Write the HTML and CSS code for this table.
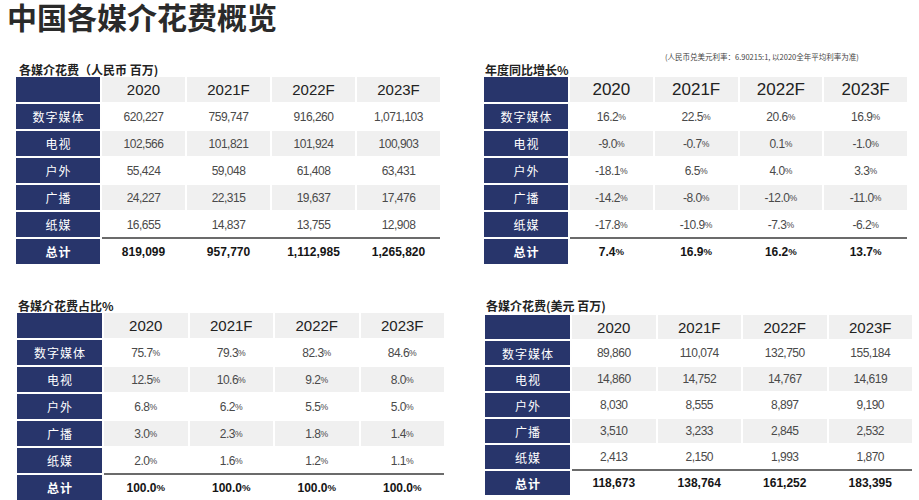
FILE: index.html
```html
<!DOCTYPE html>
<html lang="zh">
<head>
<meta charset="utf-8">
<link rel="stylesheet" href="styles.css">
</head>
<body>
<div class="page">
  <h1 class="title">中国各媒介花费概览</h1>
  <div class="grid">
    <section class="panel p1">
      <h2 class="cap">各媒介花费（人民币 百万)</h2>
      <div class="tbl">
        <div class="row head"><div class="lab"></div><div class="c">2020</div><div class="c">2021F</div><div class="c">2022F</div><div class="c">2023F</div></div>
        <div class="row"><div class="lab">数字媒体</div><div class="c">620,227</div><div class="c">759,747</div><div class="c">916,260</div><div class="c">1,071,103</div></div>
        <div class="row alt"><div class="lab">电视</div><div class="c">102,566</div><div class="c">101,821</div><div class="c">101,924</div><div class="c">100,903</div></div>
        <div class="row"><div class="lab">户外</div><div class="c">55,424</div><div class="c">59,048</div><div class="c">61,408</div><div class="c">63,431</div></div>
        <div class="row alt"><div class="lab">广播</div><div class="c">24,227</div><div class="c">22,315</div><div class="c">19,637</div><div class="c">17,476</div></div>
        <div class="row"><div class="lab">纸媒</div><div class="c">16,655</div><div class="c">14,837</div><div class="c">13,755</div><div class="c">12,908</div></div>
        <div class="row total"><div class="lab">总计</div><div class="vals"><div class="c">819,099</div><div class="c">957,770</div><div class="c">1,112,985</div><div class="c">1,265,820</div></div></div>
      </div>
    </section>

    <section class="panel p2">
      <p class="note">(人民币兑美元利率：6.90215:1, 以2020全年平均利率为准)</p>
      <h2 class="cap">年度同比增长%</h2>
      <div class="tbl">
        <div class="row head"><div class="lab"></div><div class="c">2020</div><div class="c">2021F</div><div class="c">2022F</div><div class="c">2023F</div></div>
        <div class="row"><div class="lab">数字媒体</div><div class="c">16.2<span class="pc">%</span></div><div class="c">22.5<span class="pc">%</span></div><div class="c">20.6<span class="pc">%</span></div><div class="c">16.9<span class="pc">%</span></div></div>
        <div class="row alt"><div class="lab">电视</div><div class="c">-9.0<span class="pc">%</span></div><div class="c">-0.7<span class="pc">%</span></div><div class="c">0.1<span class="pc">%</span></div><div class="c">-1.0<span class="pc">%</span></div></div>
        <div class="row"><div class="lab">户外</div><div class="c">-18.1<span class="pc">%</span></div><div class="c">6.5<span class="pc">%</span></div><div class="c">4.0<span class="pc">%</span></div><div class="c">3.3<span class="pc">%</span></div></div>
        <div class="row alt"><div class="lab">广播</div><div class="c">-14.2<span class="pc">%</span></div><div class="c">-8.0<span class="pc">%</span></div><div class="c">-12.0<span class="pc">%</span></div><div class="c">-11.0<span class="pc">%</span></div></div>
        <div class="row"><div class="lab">纸媒</div><div class="c">-17.8<span class="pc">%</span></div><div class="c">-10.9<span class="pc">%</span></div><div class="c">-7.3<span class="pc">%</span></div><div class="c">-6.2<span class="pc">%</span></div></div>
        <div class="row total"><div class="lab">总计</div><div class="vals"><div class="c">7.4<span class="pc">%</span></div><div class="c">16.9<span class="pc">%</span></div><div class="c">16.2<span class="pc">%</span></div><div class="c">13.7<span class="pc">%</span></div></div></div>
      </div>
    </section>

    <section class="panel p3">
      <h2 class="cap">各媒介花费占比%</h2>
      <div class="tbl">
        <div class="row head"><div class="lab"></div><div class="c">2020</div><div class="c">2021F</div><div class="c">2022F</div><div class="c">2023F</div></div>
        <div class="row"><div class="lab">数字媒体</div><div class="c">75.7<span class="pc">%</span></div><div class="c">79.3<span class="pc">%</span></div><div class="c">82.3<span class="pc">%</span></div><div class="c">84.6<span class="pc">%</span></div></div>
        <div class="row alt"><div class="lab">电视</div><div class="c">12.5<span class="pc">%</span></div><div class="c">10.6<span class="pc">%</span></div><div class="c">9.2<span class="pc">%</span></div><div class="c">8.0<span class="pc">%</span></div></div>
        <div class="row"><div class="lab">户外</div><div class="c">6.8<span class="pc">%</span></div><div class="c">6.2<span class="pc">%</span></div><div class="c">5.5<span class="pc">%</span></div><div class="c">5.0<span class="pc">%</span></div></div>
        <div class="row alt"><div class="lab">广播</div><div class="c">3.0<span class="pc">%</span></div><div class="c">2.3<span class="pc">%</span></div><div class="c">1.8<span class="pc">%</span></div><div class="c">1.4<span class="pc">%</span></div></div>
        <div class="row"><div class="lab">纸媒</div><div class="c">2.0<span class="pc">%</span></div><div class="c">1.6<span class="pc">%</span></div><div class="c">1.2<span class="pc">%</span></div><div class="c">1.1<span class="pc">%</span></div></div>
        <div class="row total"><div class="lab">总计</div><div class="vals"><div class="c">100.0<span class="pc">%</span></div><div class="c">100.0<span class="pc">%</span></div><div class="c">100.0<span class="pc">%</span></div><div class="c">100.0<span class="pc">%</span></div></div></div>
      </div>
    </section>

    <section class="panel p4">
      <h2 class="cap">各媒介花费(美元 百万)</h2>
      <div class="tbl">
        <div class="row head"><div class="lab"></div><div class="c">2020</div><div class="c">2021F</div><div class="c">2022F</div><div class="c">2023F</div></div>
        <div class="row"><div class="lab">数字媒体</div><div class="c">89,860</div><div class="c">110,074</div><div class="c">132,750</div><div class="c">155,184</div></div>
        <div class="row alt"><div class="lab">电视</div><div class="c">14,860</div><div class="c">14,752</div><div class="c">14,767</div><div class="c">14,619</div></div>
        <div class="row"><div class="lab">户外</div><div class="c">8,030</div><div class="c">8,555</div><div class="c">8,897</div><div class="c">9,190</div></div>
        <div class="row alt"><div class="lab">广播</div><div class="c">3,510</div><div class="c">3,233</div><div class="c">2,845</div><div class="c">2,532</div></div>
        <div class="row"><div class="lab">纸媒</div><div class="c">2,413</div><div class="c">2,150</div><div class="c">1,993</div><div class="c">1,870</div></div>
        <div class="row total"><div class="lab">总计</div><div class="vals"><div class="c">118,673</div><div class="c">138,764</div><div class="c">161,252</div><div class="c">183,395</div></div></div>
      </div>
    </section>
  </div>
</div>
</body>
</html>
```

FILE: styles.css
```css
html, body {
  margin: 0;
  padding: 0;
  background: #ffffff;
}
body {
  font-family: "Liberation Sans", "Noto Sans CJK SC", sans-serif;
  color: #333333;
}
.page {
  width: 919px;
  height: 500px;
  overflow: hidden;
}
.title {
  margin: 0;
  padding: 2px 0 0 7px;
  font-family: "Liberation Sans", "Noto Sans CJK SC", sans-serif;
  font-size: 30px;
  font-weight: 700;
  line-height: 34px;
  height: 34px;
  color: #2a2a2a;
}
.grid {
  display: grid;
  grid-template-columns: 428px 428px;
  column-gap: 40px;
  row-gap: 34px;
  padding-left: 16px;
  margin-top: 15px;
  align-items: end;
}
.panel {
  display: flex;
  flex-direction: column;
}
.p1 { width: 424px; }
.p2 { width: 423px; }
.p3, .p4 {
  margin-left: 1px;
  align-self: start;
}
.note {
  margin: 0;
  padding-left: 181px;
  font-family: "Noto Sans CJK SC", sans-serif;
  font-size: 7.5px;
  line-height: 11px;
  color: #444444;
  white-space: nowrap;
}
.cap {
  margin: 0;
  padding-left: 3px;
  font-family: "Noto Sans CJK SC", sans-serif;
  font-size: 12px;
  font-weight: 700;
  line-height: 15px;
  color: #222222;
}
.p2 .cap, .p3 .cap, .p4 .cap { padding-left: 1px; }
.tbl {
  display: flex;
  flex-direction: column;
}
.row {
  display: grid;
  grid-template-columns: 84px repeat(4, 1fr);
  column-gap: 2px;
  height: 25px;
  margin-top: 2px;
}
.p3 .row, .p4 .row { grid-template-columns: 85px repeat(4, 1fr); }
.p4 .row { height: 24px; }
.p4 .tbl { margin-top: 2px; }
.row.head { margin-top: 0; }
.lab {
  background: #28356b;
  color: #ffffff;
  display: flex;
  align-items: center;
  justify-content: center;
  font-family: "Noto Sans CJK SC", sans-serif;
  font-size: 12px;
  letter-spacing: 1px;
  padding-left: 1px;
}
.c {
  display: flex;
  align-items: center;
  justify-content: center;
  font-family: "Liberation Sans", sans-serif;
  font-size: 12px;
  letter-spacing: -0.5px;
  color: #4a4a4a;
}
.pc { font-size: 0.72em; letter-spacing: 0; }
.head .c, .alt .c { background: #f0f0f0; }
.head .c {
  font-size: 15px;
  letter-spacing: 0;
  color: #222222;
}
.p2 .head .c { font-size: 17px; }
.row.total {
  height: 27px;
  margin-top: 0;
}
.p4 .row.total { height: 26px; }
.total .lab {
  margin-top: 2px;
  font-weight: 700;
}
.vals {
  grid-column: 2 / -1;
  display: grid;
  grid-template-columns: repeat(4, 1fr);
  column-gap: 2px;
  border-top: 2px solid #6b6b6b;
}
.vals .c {
  font-size: 12px;
  font-weight: 700;
  letter-spacing: 0;
  color: #151515;
}
.vals .pc { font-size: 0.8em; }
```
